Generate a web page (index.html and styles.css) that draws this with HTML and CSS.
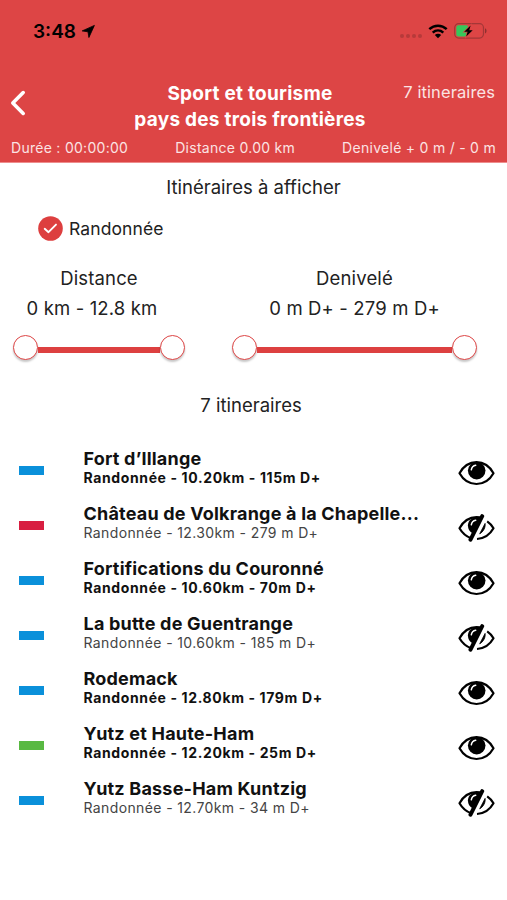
FILE: index.html
```html
<!DOCTYPE html>
<html lang="fr">
<head>
    <meta charset="UTF-8">
    <meta name="viewport" content="width=device-width, initial-scale=1.0">
    <title>Sport et tourisme - pays des trois frontières</title>
    <link rel="stylesheet" href="styles.css">
</head>
<body>
    <!-- icônes partagées -->
    <svg class="sprite" width="0" height="0">
        <symbol id="eye" viewBox="0 0 37 28">
            <path d="M1.5 14.3C5 8 11 3.2 18.5 3.2S32 8 35.5 14.3C32 20.5 26 25 18.5 25S5 20.5 1.5 14.3Z" fill="none" stroke="#000" stroke-width="2.2" stroke-linejoin="round"/>
            <circle cx="18.7" cy="11.6" r="8.8"/>
            <path d="M13.3 10.8C13.7 8.3 15.3 6.7 17.7 6.3" fill="none" stroke="#fff" stroke-width="1.5" stroke-linecap="round"/>
        </symbol>
        <symbol id="eye-off" viewBox="0 0 37 28">
            <path d="M24.5 4.2C22.7 3.5 20.7 3.2 18.5 3.2C11 3.2 5 8 1.5 14.3C4 18.6 7.5 22.2 13 24.3" fill="none" stroke="#000" stroke-width="2.2" stroke-linejoin="round"/>
            <path d="M24 4.6C19 1.3 9.9 4 9.9 11.6C9.9 15 11.7 18 14.8 19.5Z"/>
            <path d="M13.3 10.8C13.7 8.3 15.3 6.7 17.7 6.3" fill="none" stroke="#fff" stroke-width="1.5" stroke-linecap="round"/>
            <path d="M24.2 2.2L12.5 25.6" stroke="#000" stroke-width="4" stroke-linecap="round"/>
            <path d="M29.2 7.4C31.8 9.2 34 11.6 35.5 14.3C32 20.5 26.4 24.6 19 25" fill="none" stroke="#000" stroke-width="2.2" stroke-linejoin="round"/>
            <path d="M27.1 9.4C27.7 13.2 25.5 17.7 21.7 19.8Z" stroke="#000" stroke-width=".8" stroke-linejoin="round"/>
        </symbol>
    </svg>

    <header class="header">
        <div class="status-bar">
            <span class="clock">3:48</span>
            <svg class="location" width="15" height="15" viewBox="0 0 15 15"><path d="M13.400 1.400L1.200 6.900L7 7.800L7.900 13.500Z" stroke="#000" stroke-width=".8" stroke-linejoin="round"/></svg>
            <div class="signal"><i></i><i></i><i></i><i></i></div>
            <svg class="wifi" width="20" height="15" viewBox="0 0 20 15">
                <path d="M1.3 5.1C6.3.5 13.7.5 18.7 5.1M4.7 8.6C7.800 5.800 12.200 5.800 15.300 8.600" fill="none" stroke="#000" stroke-width="2.5"/>
                <path d="M6.8 11C8.7 9.4 11.3 9.4 13.2 11L10 14.3Z"/>
            </svg>
            <svg class="battery" width="33" height="16" viewBox="0 0 33 16">
                <rect x=".7" y=".7" width="28.8" height="14.4" rx="4" fill="none" stroke="#a33737" stroke-width="1.2"/>
                <path d="M31 5.300C33 6.200 33 9.600 31 10.500Z" fill="#8e3030"/>
                <rect x="2.3" y="2.3" width="12" height="11.2" rx="2.2" fill="#35c75a"/>
                <path d="M16.6 2.4L10.2 8.8H13.6L12.2 13.6L18.7 7.2H15.3Z" stroke="#dd4545" stroke-width="1.4" paint-order="stroke"/>
            </svg>
        </div>
        <div class="title-bar">
            <svg class="back" width="16" height="26" viewBox="0 0 16 26"><path d="M13.2 2.6L2.8 13L13.2 23.4" fill="none" stroke="#fff" stroke-width="3.6" stroke-linecap="round" stroke-linejoin="round"/></svg>
            <h1 class="title">Sport et tourisme<br>pays des trois frontières</h1>
            <span class="count">7 itineraires</span>
        </div>
        <div class="stats">
            <span>Durée : 00:00:00</span>
            <span>Distance 0.00 km</span>
            <span>Denivelé + 0 m / - 0 m</span>
        </div>
    </header>

    <main>
        <h2 class="filter-title">Itinéraires à afficher</h2>
        <div class="checkbox">
            <svg width="25" height="25" viewBox="0 0 25 25"><circle cx="12.5" cy="12.5" r="12.3" fill="#dd3f3f"/><path d="M6.7 12.8L10.5 16.2L18 8.6" fill="none" stroke="#fff" stroke-width="1.9" stroke-linecap="round" stroke-linejoin="round"/></svg>
            <span>Randonnée</span>
        </div>

        <div class="filters">
            <div class="filter distance">
                <p>Distance</p>
                <p class="range-value">0 km - 12.8 km</p>
                <div class="slider"><span class="thumb"></span><span class="track"></span><span class="thumb"></span></div>
            </div>
            <div class="filter denivele">
                <p>Denivelé</p>
                <p class="range-value">0 m D+ - 279 m D+</p>
                <div class="slider"><span class="thumb"></span><span class="track"></span><span class="thumb"></span></div>
            </div>
        </div>

        <h2 class="list-title">7 itineraires</h2>

        <ul class="routes">
            <li class="route visible">
                <span class="level blue"></span>
                <div class="info"><h3>Fort d’Illange</h3><p>Randonnée - 10.20km - 115m D+</p></div>
                <svg class="eye"><use href="#eye"/></svg>
            </li>
            <li class="route">
                <span class="level red"></span>
                <div class="info"><h3>Château de Volkrange à la Chapelle...</h3><p>Randonnée - 12.30km - 279 m D+</p></div>
                <svg class="eye"><use href="#eye-off"/></svg>
            </li>
            <li class="route visible">
                <span class="level blue"></span>
                <div class="info"><h3>Fortifications du Couronné</h3><p>Randonnée - 10.60km - 70m D+</p></div>
                <svg class="eye"><use href="#eye"/></svg>
            </li>
            <li class="route">
                <span class="level blue"></span>
                <div class="info"><h3>La butte de Guentrange</h3><p>Randonnée - 10.60km - 185 m D+</p></div>
                <svg class="eye"><use href="#eye-off"/></svg>
            </li>
            <li class="route visible">
                <span class="level blue"></span>
                <div class="info"><h3>Rodemack</h3><p>Randonnée - 12.80km - 179m D+</p></div>
                <svg class="eye"><use href="#eye"/></svg>
            </li>
            <li class="route visible">
                <span class="level green"></span>
                <div class="info"><h3>Yutz et Haute-Ham</h3><p>Randonnée - 12.20km - 25m D+</p></div>
                <svg class="eye"><use href="#eye"/></svg>
            </li>
            <li class="route">
                <span class="level blue"></span>
                <div class="info"><h3>Yutz Basse-Ham Kuntzig</h3><p>Randonnée - 12.70km - 34 m D+</p></div>
                <svg class="eye"><use href="#eye-off"/></svg>
            </li>
        </ul>
    </main>
</body>
</html>
```
FILE: styles.css
```css
* {
    box-sizing: border-box;
    margin: 0;
    padding: 0;
}

body {
    background: #fff;
    color: #222;
    font-family: Inter, sans-serif;
    min-height: 100vh;
}

.sprite {
    display: block;
    height: 0;
}

.header {
    height: 163px;
    background: #dd4545;
    color: #fff;
    border-bottom: 1px solid #ee8d8d;
}

.status-bar {
    display: flex;
    align-items: center;
    height: 62px;
    padding: 0 20px 0 33px;
    color: #000;
}

.clock {
    width: 44px;
    font-size: 19px;
    font-weight: 600;
    white-space: nowrap;
}

.location {
    margin-left: 4px;
}

.signal {
    display: flex;
    gap: 2px;
    margin-left: auto;
    margin-right: 6px;
    padding-top: 10px;
}

.signal i {
    width: 4px;
    height: 4px;
    border-radius: 50%;
    background: #b63a3a;
}

.battery {
    margin-left: 6px;
}

.title-bar {
    display: grid;
    grid-template-columns: 92px 1fr 97px;
    height: 75px;
    padding: 19px 12px 0 10px;
}

.back {
    margin-top: 9px;
}

.title {
    font-size: 19px;
    font-weight: 650;
    line-height: 26px;
    letter-spacing: 0.25px;
    text-align: center;
    white-space: nowrap;
}

.count {
    font-size: 16.5px;
    line-height: 22px;
    letter-spacing: 0.1px;
    text-align: right;
    white-space: nowrap;
    color: #fbe3e3;
}

.stats {
    display: flex;
    justify-content: space-between;
    padding: 1px 11px 0;
    font-size: 14px;
    line-height: 20px;
    letter-spacing: 0.28px;
    color: #fbe3e3;
}

.filter-title,
.list-title {
    font-size: 18.5px;
    font-weight: 400;
    line-height: 24px;
    text-align: center;
}

.filter-title {
    padding-top: 12px;
    height: 53px;
}

.checkbox {
    display: flex;
    align-items: center;
    gap: 6px;
    height: 25px;
    padding-left: 38px;
    font-size: 17.5px;
    letter-spacing: 0.1px;
}

.filters {
    display: flex;
    justify-content: space-between;
    padding: 22px 30px 0 13px;
    font-size: 18.5px;
    line-height: 30px;
    letter-spacing: 0.15px;
    text-align: center;
}

.distance {
    width: 172px;
}

.denivele {
    width: 245px;
}

.distance .range-value {
    padding-right: 14px;
}

.slider {
    display: flex;
    align-items: center;
    height: 26px;
    margin-top: 11px;
}

.thumb {
    flex: none;
    width: 25px;
    height: 25px;
    border: 1.3px solid #dd4545;
    border-radius: 50%;
    background: #fff;
    box-shadow: 0 2px 2px rgba(0, 0, 0, 0.22);
}

.track {
    flex: 1;
    height: 6px;
    margin-top: 5px;
    background: #dd4040;
}

.list-title {
    margin-top: 33px;
    padding-right: 5px;
}

.routes {
    margin-top: 28px;
    list-style: none;
}

.route {
    display: flex;
    align-items: flex-start;
    height: 55px;
    padding: 4px 12px 0 19px;
    color: #111;
}

.level {
    width: 25px;
    height: 9px;
    margin-top: 17px;
}

.blue {
    background: #0a90da;
}

.red {
    background: #d81e41;
}

.green {
    background: #59b942;
}

.info {
    flex: 1;
    margin-left: 39.5px;
    white-space: nowrap;
}

.info h3 {
    font-size: 18px;
    font-weight: 650;
    line-height: 20px;
    letter-spacing: 0.2px;
}

.info p {
    font-size: 14px;
    line-height: 18px;
    letter-spacing: 0.38px;
    color: #444;
}

.visible .info p {
    font-weight: 700;
    letter-spacing: 0.62px;
    color: #111;
}

.eye {
    width: 37px;
    height: 28px;
    margin-top: 10px;
}
```
